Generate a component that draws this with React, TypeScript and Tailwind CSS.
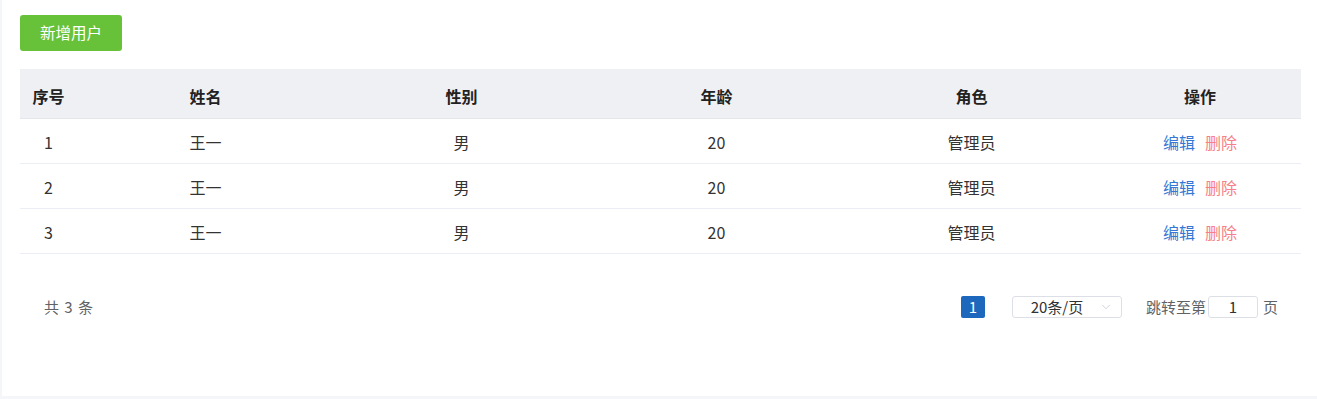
import { ChevronDown } from "lucide-react";

const users = [
  { id: 1, name: "王一", gender: "男", age: 20, role: "管理员" },
  { id: 2, name: "王一", gender: "男", age: 20, role: "管理员" },
  { id: 3, name: "王一", gender: "男", age: 20, role: "管理员" },
];

const cols = "grid grid-cols-[57px_257px_255px_255px_255px_1fr]";

export default function App() {
  return (
    <div
      className="h-[399px] w-full bg-[#f5f6fa] pl-[2px] pb-[3px] text-[16px] text-[#303133]"
      style={{ fontFamily: '"Noto Sans CJK SC", "Noto Sans", sans-serif' }}
    >
      <div className="h-full bg-white pl-[18px] pr-[16px] pt-[15px]">
        {/* Toolbar */}
        <button className="h-[36px] w-[102px] rounded-[3px] bg-[#67c23a] text-[15.5px] text-white">
          新增用户
        </button>

        {/* Table */}
        <div className="mt-[18px]">
          <div className={`${cols} h-[50px] items-center border-b border-[#e4e6eb] bg-[#eff0f4] pt-[4px] font-bold text-[#222]`}>
            <div className="text-center">序号</div>
            <div className="text-center">姓名</div>
            <div className="text-center">性别</div>
            <div className="text-center">年龄</div>
            <div className="text-center">角色</div>
            <div className="text-center">操作</div>
          </div>
          {users.map((u) => (
            <div
              key={u.id}
              className={`${cols} h-[45px] items-center border-b border-[#ebeef5] pt-[1px] text-[#333]`}
            >
              <div className="text-center">{u.id}</div>
              <div className="text-center">{u.name}</div>
              <div className="text-center">{u.gender}</div>
              <div className="text-center">{u.age}</div>
              <div className="text-center">{u.role}</div>
              <div className="flex justify-center gap-[10px]">
                <span className="text-[#3577d4]">编辑</span>
                <span className="text-[#f5808a]">删除</span>
              </div>
            </div>
          ))}
        </div>

        {/* Pagination */}
        <div className="mt-[42px] flex h-[22px] items-center justify-between pl-[24px] pr-[23px] text-[15px] text-[#606266]">
          <span className="tracking-[1px]">共 3 条</span>
          <div className="flex items-center">
            <span className="flex h-[22px] w-[24px] items-center justify-center rounded-[2px] bg-[#1d68bd] text-white">
              1
            </span>
            <div className="relative ml-[27px] flex h-[22px] w-[110px] items-center justify-center rounded-[3px] border border-[#dcdfe6] pr-[30px] pl-[10px] text-[#303133]">
              20条/页
              <ChevronDown className="absolute right-[8px] h-[14px] w-[14px] text-[#c0c4cc]" strokeWidth={1.25} />
            </div>
            <span className="ml-[24px]">跳转至第</span>
            <div className="ml-[2px] flex h-[22px] w-[50px] items-center justify-center rounded-[3px] border border-[#dcdfe6] text-[#303133]">
              1
            </div>
            <span className="ml-[5px]">页</span>
          </div>
        </div>
      </div>
    </div>
  );
}
